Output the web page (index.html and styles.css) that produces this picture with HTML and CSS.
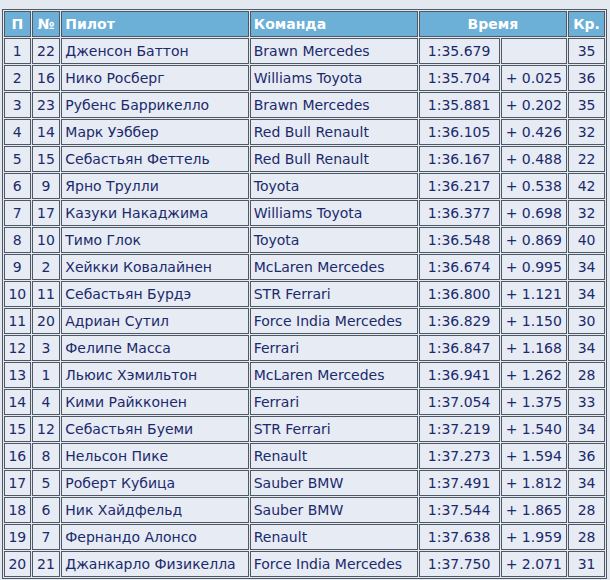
FILE: index.html
```html
<!DOCTYPE html>
<html lang="ru">
<head>
<meta charset="utf-8">
<title>Квалификация</title>
<link rel="stylesheet" href="styles.css">
</head>
<body>
<table class="res">
<colgroup>
<col class="c1"><col class="c2"><col class="c3"><col class="c4"><col class="c5"><col class="c6"><col class="c7">
</colgroup>
<thead>
<tr><th>П</th><th>№</th><th class="l">Пилот</th><th class="l">Команда</th><th colspan="2">Время</th><th>Кр.</th></tr>
</thead>
<tbody>
<tr><td>1</td><td>22</td><td class="l">Дженсон Баттон</td><td class="l">Brawn Mercedes</td><td>1:35.679</td><td></td><td>35</td></tr>
<tr><td>2</td><td>16</td><td class="l">Нико Росберг</td><td class="l">Williams Toyota</td><td>1:35.704</td><td>+ 0.025</td><td>36</td></tr>
<tr><td>3</td><td>23</td><td class="l">Рубенс Баррикелло</td><td class="l">Brawn Mercedes</td><td>1:35.881</td><td>+ 0.202</td><td>35</td></tr>
<tr><td>4</td><td>14</td><td class="l">Марк Уэббер</td><td class="l">Red Bull Renault</td><td>1:36.105</td><td>+ 0.426</td><td>32</td></tr>
<tr><td>5</td><td>15</td><td class="l">Себастьян Феттель</td><td class="l">Red Bull Renault</td><td>1:36.167</td><td>+ 0.488</td><td>22</td></tr>
<tr><td>6</td><td>9</td><td class="l">Ярно Трулли</td><td class="l">Toyota</td><td>1:36.217</td><td>+ 0.538</td><td>42</td></tr>
<tr><td>7</td><td>17</td><td class="l">Казуки Накаджима</td><td class="l">Williams Toyota</td><td>1:36.377</td><td>+ 0.698</td><td>32</td></tr>
<tr><td>8</td><td>10</td><td class="l">Тимо Глок</td><td class="l">Toyota</td><td>1:36.548</td><td>+ 0.869</td><td>40</td></tr>
<tr><td>9</td><td>2</td><td class="l">Хейкки Ковалайнен</td><td class="l">McLaren Mercedes</td><td>1:36.674</td><td>+ 0.995</td><td>34</td></tr>
<tr><td>10</td><td>11</td><td class="l">Себастьян Бурдэ</td><td class="l">STR Ferrari</td><td>1:36.800</td><td>+ 1.121</td><td>34</td></tr>
<tr><td>11</td><td>20</td><td class="l">Адриан Сутил</td><td class="l">Force India Mercedes</td><td>1:36.829</td><td>+ 1.150</td><td>30</td></tr>
<tr><td>12</td><td>3</td><td class="l">Фелипе Масса</td><td class="l">Ferrari</td><td>1:36.847</td><td>+ 1.168</td><td>34</td></tr>
<tr><td>13</td><td>1</td><td class="l">Льюис Хэмильтон</td><td class="l">McLaren Mercedes</td><td>1:36.941</td><td>+ 1.262</td><td>28</td></tr>
<tr><td>14</td><td>4</td><td class="l">Кими Райкконен</td><td class="l">Ferrari</td><td>1:37.054</td><td>+ 1.375</td><td>33</td></tr>
<tr><td>15</td><td>12</td><td class="l">Себастьян Буеми</td><td class="l">STR Ferrari</td><td>1:37.219</td><td>+ 1.540</td><td>34</td></tr>
<tr><td>16</td><td>8</td><td class="l">Нельсон Пике</td><td class="l">Renault</td><td>1:37.273</td><td>+ 1.594</td><td>36</td></tr>
<tr><td>17</td><td>5</td><td class="l">Роберт Кубица</td><td class="l">Sauber BMW</td><td>1:37.491</td><td>+ 1.812</td><td>34</td></tr>
<tr><td>18</td><td>6</td><td class="l">Ник Хайдфельд</td><td class="l">Sauber BMW</td><td>1:37.544</td><td>+ 1.865</td><td>28</td></tr>
<tr><td>19</td><td>7</td><td class="l">Фернандо Алонсо</td><td class="l">Renault</td><td>1:37.638</td><td>+ 1.959</td><td>28</td></tr>
<tr><td>20</td><td>21</td><td class="l">Джанкарло Физикелла</td><td class="l">Force India Mercedes</td><td>1:37.750</td><td>+ 2.071</td><td>31</td></tr>
</tbody>
</table>
</body>
</html>
```
FILE: styles.css
```css
html, body {
  margin: 0;
  padding: 0;
  background: #e4e8ef;
}
body {
  padding: 9px 0 0 2px;
  font-family: "DejaVu Sans", Verdana, sans-serif;
  font-size: 14px;
  color: #1a2a6c;
}
.res {
  border-collapse: separate;
  border-spacing: 1px;
  border: 1px solid #4f5965;
  table-layout: fixed;
  width: 605px;
}
.c1 { width: 26px; }
.c2 { width: 28px; }
.c3 { width: 183px; }
.c4 { width: 164px; }
.c5 { width: 79px; }
.c6 { width: 65px; }
.c7 { width: 36px; }
.res th, .res td {
  border: 1px solid #4f5965;
  height: 24px;
  padding: 0 3px;
  line-height: 24px;
  text-align: center;
  white-space: nowrap;
  overflow: hidden;
}
.res th {
  background: #6cafd7;
  color: #ffffff;
  font-weight: bold;
}
.res td {
  background: #e7ebf3;
}
.res .l {
  text-align: left;
}
```
